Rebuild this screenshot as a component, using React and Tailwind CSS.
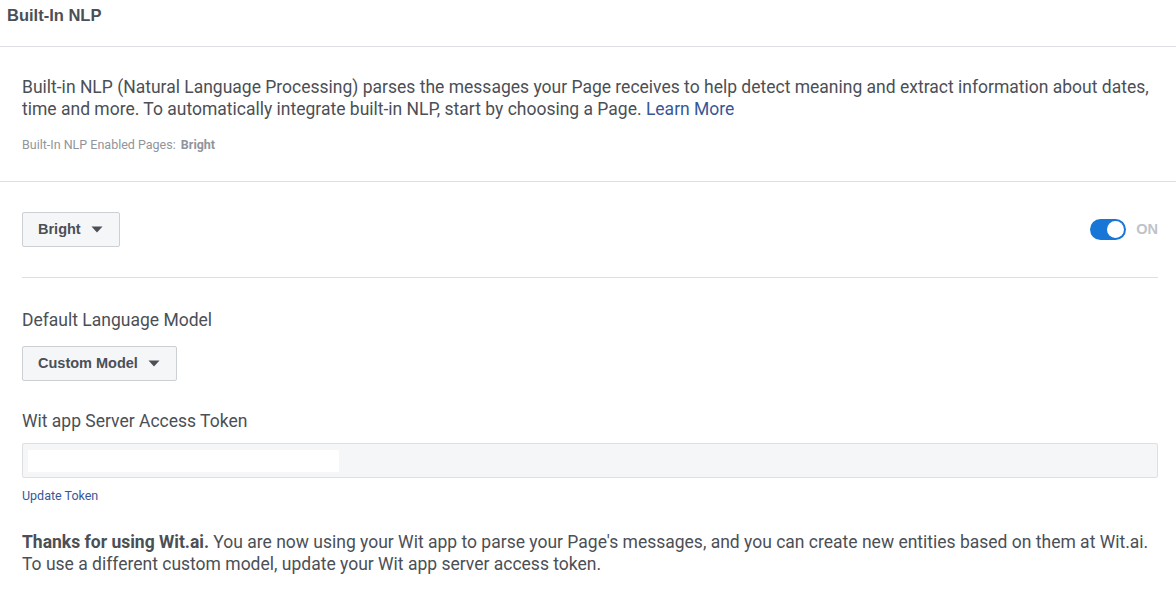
export default function App() {
  const roboto = { fontFamily: "Roboto, 'Liberation Sans', sans-serif" };
  return (
    <div className="w-[1176px] h-[589px] bg-white overflow-hidden text-[#4b4f56]" style={roboto}>
      {/* Header */}
      <div className="h-[47px] border-b border-[#dddfe2] px-[7px] pt-[5px]">
        <h1 className="text-[16.5px] leading-[20px] font-bold text-[#4b4f56] font-['Liberation_Sans',sans-serif]">
          Built-In NLP
        </h1>
      </div>

      {/* Intro */}
      <div className="border-b border-[#dddfe2] pl-[22px] pr-[18px] pt-[29px] pb-[28px]">
        <p className="text-[17.5px] leading-[22px] text-[#4b4f56]">
          Built-in NLP (Natural Language Processing) parses the messages your Page receives to help detect meaning and extract information about dates, time and more. To automatically integrate built-in NLP, start by choosing a Page.{" "}
          <a className="text-[#365899]">Learn More</a>
        </p>
        <p className="mt-[17px] text-[12.5px] leading-[16px] text-[#90949c]">
          Built-In NLP Enabled Pages:{" "}
          <span className="font-bold text-[#90949c] ml-[2px]">Bright</span>
        </p>
      </div>

      <div className="pl-[22px] pr-[18px]">
        {/* Page select row */}
        <div className="flex items-center justify-between pt-[30px] pb-[30px] border-b border-[#dddfe2]">
          <button className="h-[35px] pl-[15px] pr-[16px] flex items-center gap-[10px] bg-[#f5f6f7] border border-[#ccd0d5] rounded-[2px] text-[14.5px] font-bold text-[#4b4f56] font-['Liberation_Sans',sans-serif]">
            Bright
            <svg width="12" height="7" viewBox="0 0 12 7"><path d="M0.5 0.5 L11.5 0.5 L6 6.5 Z" fill="#4b4f56" /></svg>
          </button>
          <div className="flex items-center gap-[10px]">
            <div className="w-[36px] h-[21px] rounded-full bg-[#1877d6] relative">
              <div className="absolute right-[2px] top-[2px] w-[17px] h-[17px] rounded-full bg-white" />
            </div>
            <span className="text-[14.5px] font-bold text-[#bec3c9] font-['Liberation_Sans',sans-serif]">ON</span>
          </div>
        </div>

        {/* Language model */}
        <div className="pt-[31px]">
          <p className="text-[17.5px] leading-[22px] text-[#4b4f56]">Default Language Model</p>
          <button className="mt-[15px] h-[35px] pl-[15px] pr-[16px] flex items-center gap-[10px] bg-[#f5f6f7] border border-[#ccd0d5] rounded-[2px] text-[14.5px] font-bold text-[#4b4f56] font-['Liberation_Sans',sans-serif]">
            Custom Model
            <svg width="12" height="7" viewBox="0 0 12 7"><path d="M0.5 0.5 L11.5 0.5 L6 6.5 Z" fill="#4b4f56" /></svg>
          </button>

          <p className="mt-[29px] text-[17.5px] leading-[22px] text-[#4b4f56]">Wit app Server Access Token</p>
          <div className="mt-[11px] h-[35px] bg-[#f5f6f7] border border-[#dddfe2] rounded-[2px] flex items-center px-[5px]">
            <div className="w-[311px] h-[22px] bg-white" />
          </div>
          <a className="block mt-[10px] text-[12.5px] leading-[16px] text-[#365899]">Update Token</a>

          <p className="mt-[27px] text-[17.5px] leading-[22px] text-[#4b4f56]">
            <span className="font-bold">Thanks for using Wit.ai.</span> You are now using your Wit app to parse your Page's messages, and you can create new entities based on them at Wit.ai. To use a different custom model, update your Wit app server access token.
          </p>
        </div>
      </div>
    </div>
  );
}
